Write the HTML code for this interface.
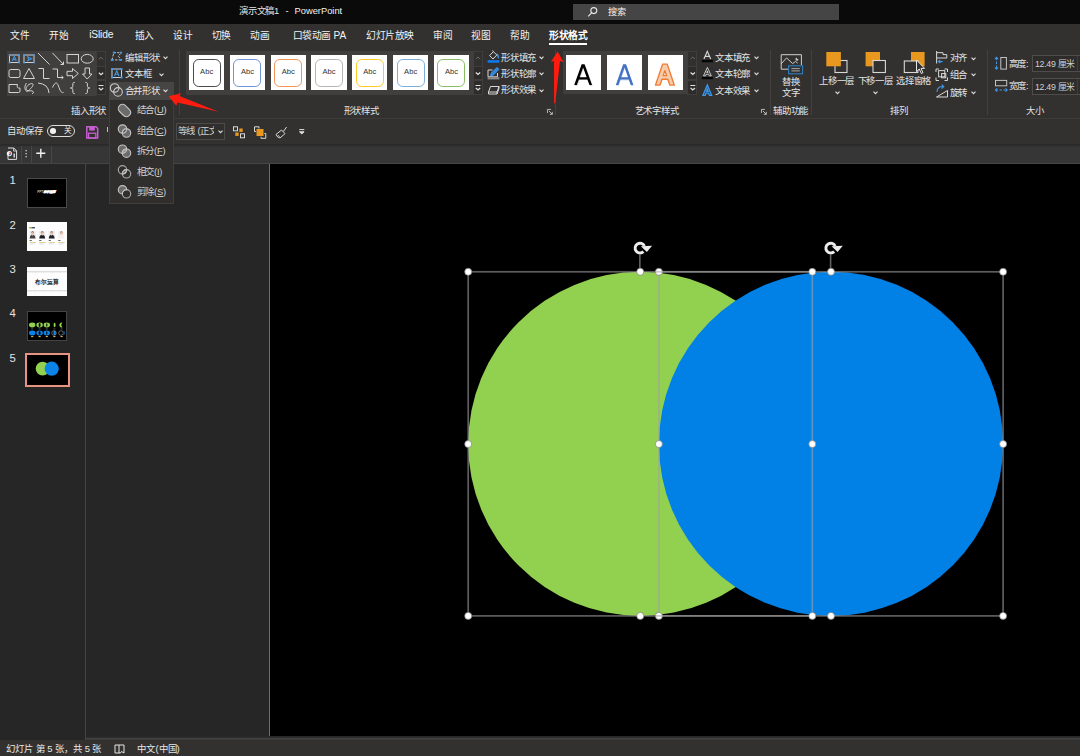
<!DOCTYPE html>
<html lang="zh-CN">
<head>
<meta charset="utf-8">
<title>PowerPoint</title>
<style>
*{margin:0;padding:0;box-sizing:border-box}
html,body{width:1080px;height:756px;overflow:hidden;background:#262626}
body{position:relative;font-family:"Liberation Sans",sans-serif;font-size:9.7px;line-height:12px;color:#fff}
.a{position:absolute}
.t{position:absolute;white-space:nowrap;color:#f3f3f3;height:12px;overflow:visible}
.b{font-weight:bold}
.r{font-size:9.4px;letter-spacing:-0.25px;color:#e4e4e4}
.tb{letter-spacing:-0.4px}
svg{position:absolute;overflow:visible}
.ln{stroke:#d4d4d4;stroke-width:1;fill:none}
.hd{position:absolute;width:8px;height:8px;border-radius:50%;background:#fff;border:.8px solid #b0b0b0}
.car{position:absolute;width:5px;height:3px}
</style>
</head>
<body>
<!-- ===== title bar ===== -->
<div class="a" id="titlebar" style="left:0;top:0;width:1080px;height:24px;background:#0a0a0a"></div>
<div class="t r" style="left:239px;top:5px">演示文稿1</div><div class="t" style="left:285.6px;top:5px;font-size:9.4px">-</div><div class="t" style="left:294.6px;top:5px;font-size:9.3px">PowerPoint</div>
<div class="a" style="left:573px;top:4px;width:266px;height:16px;background:#454545"></div>
<svg style="left:587px;top:6px" width="12" height="12" viewBox="0 0 12 12"><circle cx="6.8" cy="4.6" r="3" fill="none" stroke="#e6e6e6" stroke-width="1.1"/><path d="M4.6 6.8 L1.2 10.4" stroke="#e6e6e6" stroke-width="1.2" fill="none"/></svg>
<div class="t" style="left:608px;top:6px;font-size:9.2px">搜索</div>

<!-- ===== ribbon background ===== -->
<div class="a" id="ribbon" style="left:0;top:24px;width:1080px;height:95px;background:#323130"></div>
<div class="a" style="left:0;top:118px;width:1080px;height:1px;background:#3d3c3b"></div>
<!-- QAT row -->
<div class="a" id="qat" style="left:0;top:119px;width:1080px;height:26px;background:#323130"></div>
<div class="a" style="left:0;top:144px;width:1080px;height:1px;background:#2a2928"></div>
<!-- doc tab strip -->
<div class="a" id="strip" style="left:0;top:145px;width:1080px;height:18px;background:linear-gradient(#2a2a2a 0,#323232 1.5px,#363636 2.5px,#363636 100%)"></div>
<div class="a" style="left:0;top:163px;width:1080px;height:1px;background:#454545"></div>


<!-- ===== tabs ===== -->
<div class="t tb" style="left:10px;top:29.5px">文件</div>
<div class="t tb" style="left:49px;top:29.5px">开始</div>
<div class="t" style="left:89.3px;top:29.3px;font-size:10.3px;letter-spacing:-0.22px">iSlide</div>
<div class="t tb" style="left:134.5px;top:29.5px">插入</div>
<div class="t tb" style="left:173px;top:29.5px">设计</div>
<div class="t tb" style="left:211.8px;top:29.5px">切换</div>
<div class="t tb" style="left:250px;top:29.5px">动画</div>
<div class="t tb" style="left:292.5px;top:29.5px">口袋动画<span style="letter-spacing:0;margin-left:2.6px;font-size:10.1px">PA</span></div>
<div class="t tb" style="left:366px;top:29.5px">幻灯片放映</div>
<div class="t tb" style="left:433px;top:29.5px">审阅</div>
<div class="t tb" style="left:471px;top:29.5px">视图</div>
<div class="t tb" style="left:510px;top:29.5px">帮助</div>
<div class="t b" style="left:549px;top:29.5px;color:#fff;letter-spacing:-0.45px">形状格式</div>
<div class="a" style="left:549px;top:43px;width:38px;height:2px;background:#fff"></div>

<!-- ===== group: insert shapes ===== -->
<div class="a" style="left:7px;top:51px;width:89px;height:45px;background:#403f3e"></div>
<div class="a" style="left:96px;top:51px;width:10.2px;height:44px;background:#3f3e3d"></div>
<div class="a" style="left:97px;top:52px;width:8.2px;height:13.5px;background:#31302f"></div><div class="a" style="left:97px;top:66.6px;width:8.2px;height:12.8px;background:#2d2c2b"></div>
<div class="a" style="left:97px;top:80.6px;width:8.2px;height:13.6px;background:#2d2c2b"></div>
<svg style="left:0;top:0" width="110" height="100" viewBox="0 0 110 100">
 <g class="ln" stroke-width="1">
  <!-- row1 -->
  <rect x="9.5" y="55" width="9.5" height="7.5" stroke="#cfcfcf"/>
  <rect x="24" y="55" width="10" height="7.5" stroke="#cfcfcf"/>
  <path d="M38 53 L49.5 64.5"/>
  <path d="M52.5 53 L63.5 64.5 M63.5 61.5 V64.5 H60.5"/>
  <rect x="67" y="54.5" width="11.5" height="8.5"/>
  <ellipse cx="87.2" cy="58.8" rx="6" ry="4.4"/>
  <!-- row2 -->
  <rect x="9" y="69.5" width="11" height="8" rx="1.8"/>
  <path d="M29 68.5 L34.5 78.5 H23.5 Z"/>
  <path d="M38.5 68.5 H43.5 V78.5 H49.5"/>
  <path d="M52.5 69 H57.5 V77.5 H63 M61.5 76 L63.3 77.5 L61.5 79"/>
  <path d="M67 71.3 H72.5 V68.5 L78.3 73.5 L72.5 78.5 V75.7 H67 Z"/>
  <path d="M85 68 H89.5 V74 H92 L87.2 79 L82.5 74 H85 Z"/>
  <!-- row3 -->
  <path d="M9 84.5 H17.5 C16.5 87 17.5 88.5 20 88 V91 Q20 92.5 18.5 92.5 H9 Z"/>
  <path d="M26.5 83 C23 88 26 92.5 28 91 C33 87 34.5 83.5 31.5 83.5 C28 84 24.5 88.5 27 90.5 C29 91.5 32 90 33 91.5 C34 92.5 33.5 93.5 32 93.5"/>
  <path d="M38 83 Q48.5 84 49 93"/>
  <path d="M52.5 87.5 C56 80 57.5 83 59 87.5 C60.5 92 62 93 63.5 92.5"/>
  <path d="M74.8 82.4 C72.6 82.4 72.8 83.4 72.8 85 V86.4 C72.8 87.6 72 88 70.4 88 C72 88 72.8 88.4 72.8 89.6 V91 C72.8 92.6 72.6 93.6 74.8 93.6"/>
  <path d="M85.4 82.4 C87.6 82.4 87.4 83.4 87.4 85 V86.4 C87.4 87.6 88.2 88 89.8 88 C88.2 88 87.4 88.4 87.4 89.6 V91 C87.4 92.6 87.6 93.6 85.4 93.6"/>
 </g>
 <g fill="#3f97e8">
  <rect x="8.7" y="54.2" width="1.7" height="1.7"/><rect x="18.2" y="54.2" width="1.7" height="1.7"/><rect x="8.7" y="61.7" width="1.7" height="1.7"/><rect x="18.2" y="61.7" width="1.7" height="1.7"/>
  <rect x="23.2" y="54.2" width="1.7" height="1.7"/><rect x="33.2" y="54.2" width="1.7" height="1.7"/><rect x="23.2" y="61.7" width="1.7" height="1.7"/><rect x="33.2" y="61.7" width="1.7" height="1.7"/>
 </g>
 <path d="M12.3 61 L14.3 56.3 L16.3 61 M13 59.5 H15.6" stroke="#3f97e8" stroke-width="1.1" fill="none"/>
 <path d="M27 56.6 L31.5 58.8 L27 61 M28.3 57.4 V60.2" stroke="#3f97e8" stroke-width="1.1" fill="none"/>
 <!-- scroll glyphs -->
 <path d="M98.8 59.3 L101 57.3 L103.2 59.3" stroke="#6a6a6a" stroke-width="1" fill="none"/>
 <path d="M98.8 72.7 L101 74.7 L103.2 72.7" stroke="#e0e0e0" stroke-width="1.2" fill="none"/>
 <path d="M98.5 85.5 H103.5 M98.8 88 L101 90 L103.2 88" stroke="#e0e0e0" stroke-width="1.2" fill="none"/>
</svg>
<div class="t r" style="left:71px;top:104.5px">插入形状</div>

<!-- edit shape / text box / merge shapes -->
<svg style="left:108px;top:50px" width="70" height="50" viewBox="0 0 70 50">
 <path d="M4 9.9 L5.8 2.7 H13 M12.6 3.6 L10.2 6.2 L12.6 8.8 M13 9.9 H4" stroke="#c8c8c8" stroke-width="1" fill="none" stroke-dasharray="2.3 1.3"/>
 <g fill="#3f97e8"><rect x="2.8" y="8.9" width="2" height="2"/><rect x="4.8" y="1.6" width="2" height="2"/><rect x="12.1" y="1.6" width="2" height="2"/><rect x="12.1" y="8.9" width="2" height="2"/></g>
 <rect x="4" y="19" width="9.5" height="8.5" stroke="#cfcfcf" fill="none"/>
 <g fill="#3f97e8"><rect x="3" y="18" width="2" height="2"/><rect x="12.5" y="18" width="2" height="2"/><rect x="3" y="26.5" width="2" height="2"/><rect x="12.5" y="26.5" width="2" height="2"/></g>
 <path d="M6.6 26 L8.75 20.6 L10.9 26 M7.4 24.2 H10.1" stroke="#3f97e8" stroke-width="1.1" fill="none"/>
</svg>
<div class="a" style="left:108.5px;top:82px;width:65px;height:17.5px;background:#464544"></div>
<svg style="left:108px;top:82px" width="20" height="18" viewBox="0 0 20 18"><circle cx="6.6" cy="6" r="4.3" fill="none" stroke="#cdcdcd" stroke-width="1.1"/><circle cx="10" cy="9.9" r="4.3" fill="none" stroke="#cdcdcd" stroke-width="1.1"/></svg>
<div class="t r" style="left:125px;top:52.4px">编辑形状</div>
<div class="t r" style="left:125px;top:68px">文本框</div>
<div class="t r" style="left:124.7px;top:84.5px">合并形状</div>
<svg style="left:163px;top:56px" width="5" height="4" viewBox="0 0 5 4"><path d="M.5 .7 L2.5 2.7 L4.5 .7" stroke="#e0e0e0" stroke-width="1.1" fill="none"/></svg>
<svg style="left:158.5px;top:72.5px" width="5" height="4" viewBox="0 0 5 4"><path d="M.5 .7 L2.5 2.7 L4.5 .7" stroke="#e0e0e0" stroke-width="1.1" fill="none"/></svg>
<svg style="left:163px;top:89px" width="5" height="4" viewBox="0 0 5 4"><path d="M.5 .7 L2.5 2.7 L4.5 .7" stroke="#e0e0e0" stroke-width="1.1" fill="none"/></svg>
<div class="a" style="left:179px;top:50px;width:1px;height:65px;background:#424140"></div>

<!-- ===== group: shape styles ===== -->
<div class="a" style="left:186px;top:51px;width:286.5px;height:43.7px;background:#403f3e"></div>
<div class="a" style="left:189.0px;top:55px;width:35.3px;height:35px;background:#fff"><div class="a" style="left:3.6px;top:3.6px;width:28px;height:28.2px;border:1.6px solid #4a4a4a;border-radius:5.8px"></div><div class="t" style="left:0;width:35.3px;top:10.6px;text-align:center;font-size:7.6px;color:#333">Abc</div></div>
<div class="a" style="left:229.8px;top:55px;width:35.3px;height:35px;background:#fff"><div class="a" style="left:3.6px;top:3.6px;width:28px;height:28.2px;border:1.6px solid #7194d6;border-radius:5.8px"></div><div class="t" style="left:0;width:35.3px;top:10.6px;text-align:center;font-size:7.6px;color:#333">Abc</div></div>
<div class="a" style="left:270.6px;top:55px;width:35.3px;height:35px;background:#fff"><div class="a" style="left:3.6px;top:3.6px;width:28px;height:28.2px;border:1.6px solid #f09458;border-radius:5.8px"></div><div class="t" style="left:0;width:35.3px;top:10.6px;text-align:center;font-size:7.6px;color:#333">Abc</div></div>
<div class="a" style="left:311.4px;top:55px;width:35.3px;height:35px;background:#fff"><div class="a" style="left:3.6px;top:3.6px;width:28px;height:28.2px;border:1.6px solid #b4b4b4;border-radius:5.8px"></div><div class="t" style="left:0;width:35.3px;top:10.6px;text-align:center;font-size:7.6px;color:#333">Abc</div></div>
<div class="a" style="left:352.2px;top:55px;width:35.3px;height:35px;background:#fff"><div class="a" style="left:3.6px;top:3.6px;width:28px;height:28.2px;border:1.6px solid #ffc928;border-radius:5.8px"></div><div class="t" style="left:0;width:35.3px;top:10.6px;text-align:center;font-size:7.6px;color:#333">Abc</div></div>
<div class="a" style="left:393.0px;top:55px;width:35.3px;height:35px;background:#fff"><div class="a" style="left:3.6px;top:3.6px;width:28px;height:28.2px;border:1.6px solid #7aaedd;border-radius:5.8px"></div><div class="t" style="left:0;width:35.3px;top:10.6px;text-align:center;font-size:7.6px;color:#333">Abc</div></div>
<div class="a" style="left:433.8px;top:55px;width:35.3px;height:35px;background:#fff"><div class="a" style="left:3.6px;top:3.6px;width:28px;height:28.2px;border:1.6px solid #88bd64;border-radius:5.8px"></div><div class="t" style="left:0;width:35.3px;top:10.6px;text-align:center;font-size:7.6px;color:#333">Abc</div></div>
<div class="a" style="left:472.8px;top:51px;width:10.2px;height:44px;background:#3f3e3d"></div>
<div class="a" style="left:473.8px;top:52px;width:8.2px;height:13.5px;background:#31302f"></div><div class="a" style="left:473.8px;top:66.6px;width:8.2px;height:12.8px;background:#2d2c2b"></div>
<div class="a" style="left:473.8px;top:80.6px;width:8.2px;height:13.6px;background:#2d2c2b"></div>
<svg style="left:473px;top:51px" width="10" height="44" viewBox="0 0 10 44">
 <path d="M2.8 8 L5 6 L7.2 8" stroke="#6a6a6a" stroke-width="1" fill="none"/>
 <path d="M2.8 21.5 L5 23.5 L7.2 21.5" stroke="#e0e0e0" stroke-width="1.2" fill="none"/>
 <path d="M2.5 34.5 H7.5 M2.8 37 L5 39 L7.2 37" stroke="#e0e0e0" stroke-width="1.2" fill="none"/>
</svg>
<!-- fill / outline / effects icons -->
<svg style="left:486px;top:50px" width="16" height="48" viewBox="0 0 16 48">
 <path d="M3.6 5.6 L7.4 1.6 L10.8 5 L7 9 Z M7.4 1.6 L6.6 .4" stroke="#d8d8d8" stroke-width="1" fill="none"/><path d="M11 3.6 Q13.4 5.4 12.4 8.4 Q11.2 7 11 3.6Z" fill="#3f97e8" stroke="#3f97e8" stroke-width=".6"/>
 <rect x="1.6" y="10.2" width="11.8" height="2.5" fill="#0a7cf5"/>
 <path d="M4.6 25.8 L5.4 23 L11 17.4 L12.9 19.3 L7.4 25 Z" stroke="#3f97e8" stroke-width="1" fill="#2f86dc"/>
 <path d="M2 20 H6.5 M2 20 V26.8 H11.5 V23" stroke="#d8d8d8" stroke-width="1" fill="none"/>
 <rect x="1.6" y="27.2" width="11.8" height="2.2" fill="#8a8a8a"/>
 <path d="M4.5 36.5 H13 L11 42 H2.5 Z M2.5 42 V44 H11 L13 38.5 V36.5 M11 42 V44" stroke="#d8d8d8" stroke-width="1" fill="none"/>
</svg>
<div class="t r" style="left:501px;top:51.6px">形状填充</div>
<svg style="left:539.3px;top:56.2px" width="5" height="4" viewBox="0 0 5 4"><path d="M.5 .7 L2.5 2.7 L4.5 .7" stroke="#e0e0e0" stroke-width="1.1" fill="none"/></svg>
<div class="t r" style="left:501px;top:67.8px">形状轮廓</div>
<svg style="left:539.3px;top:72.39999999999999px" width="5" height="4" viewBox="0 0 5 4"><path d="M.5 .7 L2.5 2.7 L4.5 .7" stroke="#e0e0e0" stroke-width="1.1" fill="none"/></svg>
<div class="t r" style="left:501px;top:84.2px">形状效果</div>
<svg style="left:539.3px;top:88.8px" width="5" height="4" viewBox="0 0 5 4"><path d="M.5 .7 L2.5 2.7 L4.5 .7" stroke="#e0e0e0" stroke-width="1.1" fill="none"/></svg>
<div class="t r" style="left:343.5px;top:104.5px">形状样式</div>
<svg style="left:547px;top:109.3px" width="6.2" height="6.2" viewBox="0 0 7 7"><path d="M.5 4.5 V.5 H4.5 M2.2 2.2 L6 6 M6 3.2 V6 H3.2" stroke="#c8c8c8" stroke-width="1" fill="none"/></svg>
<div class="a" style="left:555px;top:50px;width:1px;height:65px;background:#424140"></div>
<!-- ===== group: wordart styles ===== -->
<div class="a" style="left:563px;top:51px;width:124px;height:43px;background:#403f3e"></div>
<div class="a" style="left:566px;top:55px;width:35px;height:35px;background:#fff"></div>
<div class="a" style="left:607px;top:55px;width:35px;height:35px;background:#fff"></div>
<div class="a" style="left:647.5px;top:55px;width:35.5px;height:35px;background:#fff"></div>
<svg style="left:566px;top:55px" width="117" height="35" viewBox="0 0 117 35">
 <g fill-rule="evenodd">
  <path d="M8.90 30.70 L16.35 9.90 H19.25 L26.70 30.70 H24.10 L22.09 25.10 H13.51 L11.50 30.70 Z M14.26 23.00 H21.34 L17.80 13.11 Z" fill="#cdcdcd"/>
  <path d="M8.20 30.00 L15.65 9.20 H18.55 L26.00 30.00 H23.40 L21.39 24.40 H12.81 L10.80 30.00 Z M13.56 22.30 H20.64 L17.10 12.41 Z" fill="#000"/>
  <path d="M50.15 31.00 L57.45 10.20 H60.35 L67.65 31.00 H65.05 L63.08 25.40 H54.72 L52.75 31.00 Z M55.45 23.30 H62.35 L58.90 13.48 Z" fill="#d5def1"/>
  <path d="M49.85 30.00 L57.15 9.20 H60.05 L67.35 30.00 H64.75 L62.78 24.40 H54.42 L52.45 30.00 Z M55.15 22.30 H62.05 L58.60 12.48 Z" fill="#4472c4"/>
  <path d="M89.50 30.10 L96.60 9.10 H101.20 L108.30 30.10 H103.80 L101.81 24.20 H95.99 L94.00 30.10 Z M97.21 20.60 H100.59 L98.90 15.61 Z" fill="#f8cbad" stroke="#ed7d31" stroke-width="1.4" stroke-linejoin="round"/>
 </g>
</svg>
<div class="a" style="left:687px;top:51px;width:10px;height:44px;background:#3f3e3d"></div>
<div class="a" style="left:688px;top:52px;width:8px;height:13.5px;background:#31302f"></div><div class="a" style="left:688px;top:66.6px;width:8px;height:12.8px;background:#2d2c2b"></div>
<div class="a" style="left:688px;top:80.6px;width:8px;height:13.6px;background:#2d2c2b"></div>
<svg style="left:687.5px;top:51px" width="10" height="44" viewBox="0 0 10 44">
 <path d="M2.6 8 L4.8 6 L7 8" stroke="#6a6a6a" stroke-width="1" fill="none"/>
 <path d="M2.6 21.5 L4.8 23.5 L7 21.5" stroke="#e0e0e0" stroke-width="1.2" fill="none"/>
 <path d="M2.3 34.5 H7.3 M2.6 37 L4.8 39 L7 37" stroke="#e0e0e0" stroke-width="1.2" fill="none"/>
</svg>
<svg style="left:700px;top:50px" width="16" height="48" viewBox="0 0 16 48">
 <path d="M3.9 8.9 L7.3 1.3 L10.7 8.9 M5.1 6.4 H9.5" stroke="#d8d8d8" stroke-width="1.15" fill="none"/>
 <rect x="1.8" y="9.9" width="11.1" height="2.4" fill="#060606"/>
 <path d="M3.5 25.9 L7.4 17.4 L11.3 25.9 H9.3 L8.6 24.2 H6.2 L5.5 25.9 Z M6.8 22.6 H8 L7.4 20.9 Z" stroke="#d8d8d8" stroke-width=".9" fill="none"/>
 <rect x="1.8" y="27" width="11.1" height="2.2" fill="#060606"/>
 <path d="M3 45.3 L7.3 35 L11.6 45.3 H9.4 L8.6 43.2 H6 L5.2 45.3 Z M6.6 41.3 H8 L7.3 39.3 Z" stroke="#3f97e8" stroke-width="1.3" fill="#1c3a5c"/>
</svg>
<div class="t r" style="left:715px;top:51.6px">文本填充</div>
<svg style="left:753.5px;top:56.2px" width="5" height="4" viewBox="0 0 5 4"><path d="M.5 .7 L2.5 2.7 L4.5 .7" stroke="#e0e0e0" stroke-width="1.1" fill="none"/></svg>
<div class="t r" style="left:715px;top:67.8px">文本轮廓</div>
<svg style="left:753.5px;top:72.39999999999999px" width="5" height="4" viewBox="0 0 5 4"><path d="M.5 .7 L2.5 2.7 L4.5 .7" stroke="#e0e0e0" stroke-width="1.1" fill="none"/></svg>
<div class="t r" style="left:715px;top:84.6px">文本效果</div>
<svg style="left:753.5px;top:89.19999999999999px" width="5" height="4" viewBox="0 0 5 4"><path d="M.5 .7 L2.5 2.7 L4.5 .7" stroke="#e0e0e0" stroke-width="1.1" fill="none"/></svg>
<div class="t r" style="left:634.5px;top:104.5px">艺术字样式</div>
<svg style="left:761px;top:109.3px" width="6.2" height="6.2" viewBox="0 0 7 7"><path d="M.5 4.5 V.5 H4.5 M2.2 2.2 L6 6 M6 3.2 V6 H3.2" stroke="#c8c8c8" stroke-width="1" fill="none"/></svg>
<div class="a" style="left:769.5px;top:50px;width:1px;height:65px;background:#424140"></div>
<!-- ===== group: accessibility ===== -->
<svg style="left:780px;top:53px" width="24" height="22" viewBox="0 0 24 22">
 <path d="M8 16.2 H1.2 V1.7 H21.4 V12" stroke="#cfcfcf" stroke-width="1" fill="none"/>
 <path d="M1.2 10.8 L6.6 4.9 L12.6 10.6 L15.6 8.4 L17.6 10.2" stroke="#cfcfcf" stroke-width="1" fill="none"/>
 <path d="M16.6 4.6 A1.6 1.6 0 1 0 18.6 6.6 A2.2 2.2 0 0 1 16.6 4.6Z" fill="#cfcfcf"/>
 <rect x="8.6" y="12.8" width="14" height="8" fill="#323130" stroke="#2b7fc4" stroke-width="1.1"/>
 <path d="M11.4 15.6 H19.8 M11.4 17.9 H19.8" stroke="#a8a8a8" stroke-width="1"/>
</svg>
<div class="t r" style="left:782px;top:76px">替换</div>
<div class="t r" style="left:782px;top:87px">文字</div>
<div class="t r" style="left:773px;top:104.5px">辅助功能</div>
<div class="a" style="left:811px;top:50px;width:1px;height:65px;background:#424140"></div>

<!-- ===== group: arrange ===== -->
<svg style="left:820px;top:50px" width="112" height="26" viewBox="0 0 112 26">
 <rect x="15" y="10.5" width="12" height="12" fill="none" stroke="#d8d8d8" stroke-width="1.1"/>
 <rect x="6.3" y="2" width="14.6" height="14.3" fill="#e8981f"/>
 <rect x="45.6" y="2" width="14.4" height="14.3" fill="#e8981f"/>
 <rect x="53" y="10.5" width="12.4" height="12" fill="#323130" stroke="#d8d8d8" stroke-width="1.1"/>
 <rect x="91" y="2" width="13.6" height="14.3" fill="#e8981f"/>
 <rect x="84.3" y="11" width="13.6" height="11.5" fill="#323130" stroke="#d8d8d8" stroke-width="1.1"/>
 <path d="M96.5 10 V21.5 L99.3 19 L101.3 23.5 L103 22.7 L101 18.4 H104.6 Z" fill="#323130" stroke="#e6e6e6" stroke-width="1"/>
</svg>
<div class="t r" style="left:819px;top:75px">上移一层</div>
<div class="t r" style="left:857.5px;top:75px">下移一层</div>
<div class="t r" style="left:896px;top:75px">选择窗格</div>
<svg style="left:835px;top:90.6px" width="5" height="4" viewBox="0 0 5 4"><path d="M.5 .7 L2.5 2.7 L4.5 .7" stroke="#e0e0e0" stroke-width="1.1" fill="none"/></svg>
<svg style="left:873.3px;top:90.6px" width="5" height="4" viewBox="0 0 5 4"><path d="M.5 .7 L2.5 2.7 L4.5 .7" stroke="#e0e0e0" stroke-width="1.1" fill="none"/></svg>
<svg style="left:934px;top:50px" width="16" height="50" viewBox="0 0 16 50">
 <path d="M2.6 1 V13.6" stroke="#d0d0d0" stroke-width="1.1"/>
 <path d="M3 2.7 H9 V4.6 H12.8 V8 H3" fill="none" stroke="#d8d8d8"/>
 <path d="M8.6 11.6 H4.6 M6.2 10 L4.4 11.6 L6.2 13.2" fill="none" stroke="#3f97e8" stroke-width="1.1"/>
 <rect x="4.6" y="20.6" width="6.2" height="6.2" fill="none" stroke="#d8d8d8"/>
 <rect x="7.6" y="23.6" width="4.2" height="4.2" fill="none" stroke="#d8d8d8"/>
 <path d="M2 22 V19 H5 M10.5 19 H13.5 V22 M13.5 27.5 V30.5 H10.5 M5 30.5 H2 V27.5" stroke="#d8d8d8" stroke-width="1" fill="none"/>
 <path d="M2.5 47 H13.5 V40.5 Z" fill="none" stroke="#d8d8d8"/>
 <path d="M3 42 C3 37.5 6 36.3 9.5 36.5 M7.6 34.6 L9.8 36.5 L7.6 38.6" fill="none" stroke="#3f97e8" stroke-width="1.1"/>
</svg>
<div class="t r" style="left:949.5px;top:52px">对齐</div>
<svg style="left:970.5px;top:56.6px" width="5" height="4" viewBox="0 0 5 4"><path d="M.5 .7 L2.5 2.7 L4.5 .7" stroke="#e0e0e0" stroke-width="1.1" fill="none"/></svg>
<div class="t r" style="left:949.5px;top:68.5px">组合</div>
<svg style="left:970.5px;top:73.1px" width="5" height="4" viewBox="0 0 5 4"><path d="M.5 .7 L2.5 2.7 L4.5 .7" stroke="#e0e0e0" stroke-width="1.1" fill="none"/></svg>
<div class="t r" style="left:949.5px;top:86.5px">旋转</div>
<svg style="left:970.5px;top:91.1px" width="5" height="4" viewBox="0 0 5 4"><path d="M.5 .7 L2.5 2.7 L4.5 .7" stroke="#e0e0e0" stroke-width="1.1" fill="none"/></svg>
<div class="t r" style="left:890px;top:104.5px">排列</div>
<div class="a" style="left:987px;top:50px;width:1px;height:65px;background:#424140"></div>

<!-- ===== group: size ===== -->
<svg style="left:994px;top:56px" width="14" height="40" viewBox="0 0 14 40">
 <path d="M2.5 1.8 V12.8" stroke="#3f97e8" stroke-width="1" fill="none" stroke-dasharray="2.4 1.4"/>
 <path d="M.9 3.2 L2.5 1.4 L4.1 3.2 M.9 11.4 L2.5 13.2 L4.1 11.4" stroke="#3f97e8" stroke-width="1.1" fill="none"/>
 <rect x="6.8" y="1.5" width="5.6" height="11.6" fill="none" stroke="#c4c4c4"/>
 <rect x="1.5" y="24.4" width="11.2" height="5.4" fill="none" stroke="#c4c4c4"/>
 <path d="M1.8 34 H12.8" stroke="#3f97e8" stroke-width="1" fill="none" stroke-dasharray="2.4 1.4"/>
 <path d="M3.2 32.4 L1.4 34 L3.2 35.6 M11.4 32.4 L13.2 34 L11.4 35.6" stroke="#3f97e8" stroke-width="1.1" fill="none"/>
</svg>
<div class="t r" style="left:1008.5px;top:57.8px">高度:</div>
<div class="t r" style="left:1008.5px;top:80px">宽度:</div>
<div class="a" style="left:1032px;top:55px;width:60px;height:17px;background:#2d2c2b;border:1px solid #4e4d4c"></div>
<div class="a" style="left:1032px;top:78.4px;width:60px;height:16.8px;background:#2d2c2b;border:1px solid #4e4d4c"></div><div class="a" style="left:1077px;top:56px;width:1px;height:15px;background:#403f3e"></div><div class="a" style="left:1077px;top:79.4px;width:1px;height:15px;background:#403f3e"></div>
<div class="t" style="left:1035px;top:57.5px;font-size:8.8px;letter-spacing:-0.3px;color:#d0d0d0">12.49 厘米</div>
<div class="t" style="left:1035px;top:80.6px;font-size:8.8px;letter-spacing:-0.3px;color:#d0d0d0">12.49 厘米</div>
<div class="t r" style="left:1026px;top:104.5px">大小</div>

<!-- ===== quick access toolbar ===== -->
<div class="t r" style="left:7.3px;top:125px">自动保存</div>
<div class="a" style="left:47px;top:125.3px;width:28px;height:11.6px;border:1px solid #dcdcdc;border-radius:6px"></div>
<div class="a" style="left:50.3px;top:128.3px;width:5.6px;height:5.6px;border-radius:50%;background:#f0f0f0"></div>
<div class="t" style="left:63.5px;top:125.4px;font-size:7.6px">关</div>
<svg style="left:86px;top:126px" width="13" height="13" viewBox="0 0 13 13">
 <path d="M.8 .8 H10 L11.7 2.5 V12 H.8 Z" fill="none" stroke="#c65fd0" stroke-width="1.5"/>
 <rect x="3.2" y=".8" width="5.6" height="3.8" fill="#c65fd0"/>
 <rect x="2.6" y="7.2" width="7.2" height="4.8" fill="none" stroke="#c65fd0" stroke-width="1.3"/>
</svg>
<div class="a" style="left:106.5px;top:126.5px;width:1.5px;height:5px;background:#bdbdbd"></div>
<div class="a" style="left:175.5px;top:123px;width:49.5px;height:17px;background:#302f2e;border:1px solid #4c4b4a"></div>
<div class="a" style="left:177px;top:124px;width:37.4px;height:15px;overflow:hidden"><div class="t" style="left:.5px;top:1.3px;font-size:9.4px;letter-spacing:-0.2px;color:#cfcfcf">等线 (正文</div></div>
<svg style="left:218px;top:130px" width="5" height="4" viewBox="0 0 5 4"><path d="M.5 .7 L2.5 2.7 L4.5 .7" stroke="#e0e0e0" stroke-width="1.1" fill="none"/></svg>
<svg style="left:232px;top:125px" width="76" height="15" viewBox="0 0 76 15">
 <rect x="1.5" y="1.8" width="4" height="4" fill="none" stroke="#d8d8d8"/>
 <rect x="7.3" y="3.5" width="3.4" height="3.4" fill="#e8981f"/>
 <rect x="3.3" y="7.5" width="3.4" height="3.4" fill="#e8981f"/>
 <rect x="8.5" y="8.8" width="4" height="4" fill="none" stroke="#d8d8d8"/>
 <path d="M27 3.5 V1.8 H22.5 V6.5 H24" fill="none" stroke="#d8d8d8"/>
 <rect x="24.5" y="4" width="7" height="7" fill="#e8981f"/>
 <path d="M29 11.8 V13.3 H33.8 V8.5 H32.3" fill="none" stroke="#d8d8d8"/>
 <path d="M44 9.5 L49.5 5 L53 8.6 L48 13 Q45 12.5 44 9.5 Z M46 10.2 L47.5 11.8 M51.3 6.6 L54.6 2" fill="none" stroke="#d8d8d8" stroke-width="1"/>
 <path d="M67.3 4.6 H72.3 M67.5 6.8 L69.8 8.9 L72.1 6.8 Z" stroke="#e0e0e0" stroke-width="1" fill="#e0e0e0"/>
</svg>

<!-- ===== document strip ===== -->
<div class="a" style="left:21px;top:146px;width:1px;height:17px;background:#474747"></div>
<div class="a" style="left:31px;top:146px;width:1px;height:17px;background:#474747"></div>
<div class="a" style="left:51px;top:146px;width:1px;height:17px;background:#474747"></div>
<svg style="left:6px;top:147.2px" width="46" height="14" viewBox="0 0 46 14">
 <path d="M2 1 H7.8 L10.6 3.8 V12.4 H2 V8" fill="none" stroke="#e0e0e0" stroke-width="1"/>
 <path d="M7.6 1.2 V4 H10.4" fill="none" stroke="#e0e0e0" stroke-width=".9"/>
 <circle cx="3.4" cy="6.6" r="2.6" fill="#f2f2f2"/><path d="M3.5 6.6 L3.5 4.9 A1.7 1.7 0 0 1 5.1 7.1 Z" fill="#d8452a"/><path d="M3.5 6.6 L5.1 7.1 A1.7 1.7 0 0 1 2.6 8 Z" fill="#3b74d8"/>
 <path d="M8.2 6.5 V10.5" stroke="#e0e0e0" stroke-width="1.4"/>
 <rect x="19.5" y="3" width="1.3" height="1.3" fill="#d0d0d0"/><rect x="19.5" y="6" width="1.3" height="1.3" fill="#d0d0d0"/><rect x="19.5" y="9" width="1.3" height="1.3" fill="#d0d0d0"/>
 <path d="M30.3 6.3 H39.3 M34.8 1.8 V10.8" stroke="#f2f2f2" stroke-width="1.4"/>
</svg>


<!-- ===== work area ===== -->
<div class="a" id="thumbs" style="left:0;top:164px;width:85px;height:576px;background:#262626"></div>
<div class="a" style="left:85px;top:164px;width:1px;height:576px;background:#444"></div>
<div class="a" id="midpane" style="left:86px;top:164px;width:183px;height:573px;background:#262626"></div>
<div class="a" style="left:269px;top:164px;width:1px;height:573px;background:#6e6e6e"></div>
<div class="a" id="slide" style="left:270px;top:164px;width:810px;height:572px;background:#000"></div>
<div class="a" style="left:86px;top:736px;width:994px;height:2px;background:linear-gradient(#262626,#2d2d2d)"></div>
<div class="a" style="left:86px;top:738px;width:994px;height:1px;background:#434343"></div><div class="a" style="left:86px;top:739px;width:994px;height:1px;background:#3b3a3a"></div>


<!-- ===== thumbnails ===== -->
<div class="t" style="left:9.5px;top:174px;font-size:11.3px;color:#e4e4e4">1</div>
<div class="t" style="left:9.5px;top:218.5px;font-size:11.3px;color:#e4e4e4">2</div>
<div class="t" style="left:9.5px;top:263px;font-size:11.3px;color:#e4e4e4">3</div>
<div class="t" style="left:9.5px;top:307px;font-size:11.3px;color:#e4e4e4">4</div>
<div class="t" style="left:9.5px;top:351.5px;font-size:11.3px;color:#e4e4e4">5</div>
<div class="a" style="left:27.3px;top:177.5px;width:40.2px;height:30px;background:#000;border:1px solid #4a4a4a"></div>
<svg style="left:27.3px;top:177.5px" width="41" height="30" viewBox="0 0 41 30"><g font-family="Liberation Sans, sans-serif" font-style="italic" font-weight="bold"><text x="10.2" y="15.1" font-size="3" fill="#c8c8c8">PPT</text><text x="16.6" y="15.3" font-size="3.3" fill="#fff" stroke="#fff" stroke-width=".3" letter-spacing="-.05" transform="translate(3.1,0) skewX(-12)">布尔运算</text></g></svg>
<div class="a" style="left:27.3px;top:222.2px;width:40px;height:29.2px;background:#fdfdfd"></div>
<svg style="left:27.3px;top:222.2px" width="41" height="30" viewBox="0 0 41 30">
 <rect x="2.2" y="5" width="2.6" height="1.4" fill="#9aa83c"/><rect x="4.8" y="5" width="3.2" height="1.4" fill="#44506a"/>
 <rect x="2.5" y="9" width="6.2" height="7.4" fill="#ececf0"/><ellipse cx="5.6" cy="11" rx="1.5" ry="1.7" fill="#e2bfa8"/><path d="M3.9999999999999996 10.6 Q5.6 8.2 7.199999999999999 10.6 Q5.6 9.6 3.9999999999999996 10.6Z" fill="#2a2624"/><path d="M2.5999999999999996 16.4 Q2.8 13.2 4.699999999999999 12.7 L5.6 13.8 L6.5 12.7 Q8.399999999999999 13.2 8.6 16.4Z" fill="#4a4245"/><rect x="12.1" y="9" width="6.2" height="7.4" fill="#ececf0"/><ellipse cx="15.2" cy="11" rx="1.5" ry="1.7" fill="#e2bfa8"/><path d="M13.6 10.6 Q15.2 8.2 16.8 10.6 Q15.2 9.6 13.6 10.6Z" fill="#2a2624"/><path d="M12.2 16.4 Q12.399999999999999 13.2 14.299999999999999 12.7 L15.2 13.8 L16.099999999999998 12.7 Q18.0 13.2 18.2 16.4Z" fill="#1e1e22"/><rect x="21.6" y="9" width="6.2" height="7.4" fill="#ececf0"/><ellipse cx="24.7" cy="11" rx="1.5" ry="1.7" fill="#e2bfa8"/><path d="M23.099999999999998 10.6 Q24.7 8.2 26.3 10.6 Q24.7 9.6 23.099999999999998 10.6Z" fill="#2a2624"/><path d="M21.7 16.4 Q21.9 13.2 23.8 12.7 L24.7 13.8 L25.599999999999998 12.7 Q27.5 13.2 27.7 16.4Z" fill="#23232a"/><rect x="31.2" y="9" width="6.2" height="7.4" fill="#f6f1f2"/><ellipse cx="34.3" cy="11" rx="1.5" ry="1.7" fill="#e2bfa8"/><path d="M32.699999999999996 10.6 Q34.3 8.2 35.9 10.6 Q34.3 9.6 32.699999999999996 10.6Z" fill="#6a5550"/><path d="M31.299999999999997 16.4 Q31.499999999999996 13.2 33.4 12.7 L34.3 13.8 L35.199999999999996 12.7 Q37.099999999999994 13.2 37.3 16.4Z" fill="#f4eef0"/>
 <g fill="#555"><rect x="2.6" y="18" width="2.2" height=".9"/><rect x="12.2" y="18" width="2.2" height=".9"/><rect x="21.7" y="18" width="2.2" height=".9"/><rect x="31.3" y="18" width="2.2" height=".9"/></g>
 <g fill="#d8c878"><rect x="2.6" y="20" width="6.4" height=".8"/><rect x="12.2" y="20" width="6.4" height=".8"/><rect x="21.7" y="20" width="6.4" height=".8"/><rect x="31.3" y="20" width="6.4" height=".8"/></g>
 <g fill="#c9d3e6"><rect x="2.6" y="21.6" width="5" height=".7"/><rect x="12.2" y="21.6" width="5" height=".7"/><rect x="21.7" y="21.6" width="5" height=".7"/><rect x="31.3" y="21.6" width="5" height=".7"/></g>
</svg>
<div class="a" style="left:27.3px;top:266.6px;width:40px;height:29.2px;background:#fdfdfd"></div>
<svg style="left:27.3px;top:266.5px" width="41" height="30" viewBox="0 0 41 30">
 <path d="M0 4.8 H40 M0 23.8 H40" stroke="#cfcfcf" stroke-width=".9"/>
 <path d="M8 3.4 V6.4 M16.5 3.4 V6.4 M25 3.4 V6.4 M33 3.4 V6.4 M8 22.4 V25.4 M16.5 22.4 V25.4 M25 22.4 V25.4 M33 22.4 V25.4" stroke="#e4e4e4" stroke-width=".8"/>
 <text x="19.8" y="17" font-family="Liberation Serif, serif" font-size="5.7" font-weight="bold" fill="#1c1c1c" text-anchor="middle" letter-spacing="-.2">布尔运算</text>
 <rect x="16.3" y="14.2" width="1.1" height="2.6" fill="#e8502f"/>
</svg>
<div class="a" style="left:27.3px;top:310.7px;width:40.2px;height:30px;background:#000;border:1px solid #444"></div>
<svg style="left:27.3px;top:310.7px" width="41" height="30" viewBox="0 0 41 30">
 <g fill="#92d050"><ellipse cx="5.2" cy="14" rx="3.2" ry="2.4"/><ellipse cx="12.6" cy="14" rx="3.2" ry="2.4"/><ellipse cx="19.8" cy="14" rx="3.2" ry="2.4"/><ellipse cx="27.6" cy="14" rx="1" ry="2.2"/><path d="M35.5 11.6 A2.5 2.5 0 1 0 35.5 16.4 A3.4 3.4 0 0 1 35.5 11.6Z"/></g>
 <g fill="#0a84e8"><ellipse cx="5.2" cy="22" rx="3.2" ry="2.4"/><ellipse cx="12.6" cy="22" rx="3.2" ry="2.4"/><ellipse cx="19.8" cy="22" rx="3.2" ry="2.4"/><ellipse cx="27.6" cy="22" rx="1.2" ry="2.2"/><path d="M36 19.6 A2.5 2.5 0 0 1 36 24.4 A3.4 3.4 0 0 0 36 19.6Z"/></g>
 <g fill="#000"><ellipse cx="12.6" cy="14" rx="1" ry="2"/><ellipse cx="12.6" cy="22" rx="1" ry="2"/><ellipse cx="19.8" cy="14" rx=".6" ry="1.8"/><ellipse cx="19.8" cy="22" rx=".6" ry="1.8"/></g>
 <g fill="none" stroke="#bdbdbd" stroke-width=".5"><circle cx="27" cy="22" r="2.3"/><circle cx="34" cy="22" r="2.3"/></g>
 <g fill="#e8b860"><rect x="4.2" y="25" width="2" height="1.1"/><rect x="11.6" y="25" width="2" height="1.1"/><rect x="18.8" y="25" width="2" height="1.1"/><rect x="26.4" y="25" width="2" height="1.1"/><rect x="33.6" y="25" width="2" height="1.1"/></g>
 <g fill="#777"><rect x="4.2" y="17.6" width="2" height=".7"/><rect x="11.6" y="17.6" width="2" height=".7"/><rect x="18.8" y="17.6" width="2" height=".7"/><rect x="26.4" y="17.6" width="2" height=".7"/><rect x="33.6" y="17.6" width="2" height=".7"/></g>
</svg>
<div class="a" style="left:24.6px;top:353px;width:45.6px;height:34.4px;background:#000;border:2px solid #e8937f"></div>
<svg style="left:24px;top:352px" width="48" height="36" viewBox="24 352 48 36"><circle cx="42.6" cy="368.7" r="6.9" fill="#92d050"/><circle cx="51.7" cy="368.7" r="7.1" fill="#0a84e8"/></svg>

<!-- ===== status bar ===== -->
<div class="a" id="status" style="left:0;top:740px;width:1080px;height:16px;background:#323130"></div>
<div class="t" style="left:6px;top:743px;font-size:9.4px;color:#e6e6e6">幻灯片 第 5 张，共 5 张</div>
<svg style="left:113.8px;top:743.6px" width="12" height="10" viewBox="0 0 12 10"><path d="M1 1 H5 V9 H1 Z M5 1 H10 V9 L7.5 7.5 L6.5 9 H5" fill="none" stroke="#e6e6e6" stroke-width="1"/></svg>
<div class="t" style="left:137.4px;top:743px;font-size:9.4px;color:#e6e6e6">中文(中国)</div>

<!-- ===== slide shapes ===== -->
<svg style="left:0;top:0" width="1080" height="756" viewBox="0 0 1080 756">
 <circle cx="640.25" cy="443.85" r="172.05" fill="#92d050"/>
 <circle cx="831.0" cy="443.85" r="172.1" fill="#0180e6"/>
 <!-- blue selection -->
 <rect x="658.9" y="271.8" width="344.20" height="344.10" fill="none" stroke="#a2a2a2" stroke-opacity=".58" stroke-width="1.7"/>
 <path d="M830.6 254.8 V271.8" stroke="#8c8c8c" stroke-opacity=".7" stroke-width="1.6"/>
 <circle cx="658.9" cy="271.8" r="3.5" fill="#fff" stroke="#808080" stroke-opacity=".8" stroke-width=".9"/>
 <circle cx="658.9" cy="444.05" r="3.5" fill="#fff" stroke="#808080" stroke-opacity=".8" stroke-width=".9"/>
 <circle cx="658.9" cy="615.9" r="3.5" fill="#fff" stroke="#808080" stroke-opacity=".8" stroke-width=".9"/>
 <circle cx="831.0" cy="271.8" r="3.5" fill="#fff" stroke="#808080" stroke-opacity=".8" stroke-width=".9"/>
 <circle cx="831.0" cy="615.9" r="3.5" fill="#fff" stroke="#808080" stroke-opacity=".8" stroke-width=".9"/>
 <circle cx="1003.1" cy="271.8" r="3.5" fill="#fff" stroke="#808080" stroke-opacity=".8" stroke-width=".9"/>
 <circle cx="1003.1" cy="444.05" r="3.5" fill="#fff" stroke="#808080" stroke-opacity=".8" stroke-width=".9"/>
 <circle cx="1003.1" cy="615.9" r="3.5" fill="#fff" stroke="#808080" stroke-opacity=".8" stroke-width=".9"/>
 <g transform="translate(821.60,239.40)"><path d="M13.6 6.6 A4.9 4.9 0 1 0 12.6 12.2" fill="none" stroke="#ececec" stroke-width="2.9"/><path d="M10 6.9 L21.2 6.4 L16 12.6 Z" fill="#ececec"/></g>
 <!-- green selection -->
 <rect x="468.2" y="271.8" width="344.10" height="344.10" fill="none" stroke="#a2a2a2" stroke-opacity=".58" stroke-width="1.7"/>
 <path d="M639.85 254.8 V271.8" stroke="#8c8c8c" stroke-opacity=".7" stroke-width="1.6"/>
 <circle cx="468.2" cy="271.8" r="3.5" fill="#fff" stroke="#808080" stroke-opacity=".8" stroke-width=".9"/>
 <circle cx="468.2" cy="444.05" r="3.5" fill="#fff" stroke="#808080" stroke-opacity=".8" stroke-width=".9"/>
 <circle cx="468.2" cy="615.9" r="3.5" fill="#fff" stroke="#808080" stroke-opacity=".8" stroke-width=".9"/>
 <circle cx="640.25" cy="271.8" r="3.5" fill="#fff" stroke="#808080" stroke-opacity=".8" stroke-width=".9"/>
 <circle cx="640.25" cy="615.9" r="3.5" fill="#fff" stroke="#808080" stroke-opacity=".8" stroke-width=".9"/>
 <circle cx="812.3" cy="271.8" r="3.5" fill="#fff" stroke="#808080" stroke-opacity=".8" stroke-width=".9"/>
 <circle cx="812.3" cy="444.05" r="3.5" fill="#fff" stroke="#808080" stroke-opacity=".8" stroke-width=".9"/>
 <circle cx="812.3" cy="615.9" r="3.5" fill="#fff" stroke="#808080" stroke-opacity=".8" stroke-width=".9"/>
 <g transform="translate(630.85,239.40)"><path d="M13.6 6.6 A4.9 4.9 0 1 0 12.6 12.2" fill="none" stroke="#ececec" stroke-width="2.9"/><path d="M10 6.9 L21.2 6.4 L16 12.6 Z" fill="#ececec"/></g>
</svg>

<!-- ===== merge-shapes dropdown menu ===== -->
<div class="a" style="left:108.5px;top:99.5px;width:65px;height:104px;background:#302f2e;border:1px solid #3f3e3d;border-top:0"></div>
<svg style="left:117px;top:103px" width="16" height="96" viewBox="0 0 16 96">
 <g stroke="#c2c2c2" stroke-width="1.15">
  <!-- union -->
  <path d="M2.54 2.54 A4.2 4.2 0 0 1 8.47 2.54 L12.46 6.53 A4.2 4.2 0 0 1 6.53 12.46 L2.54 8.47 A4.2 4.2 0 0 1 2.54 2.54 Z" fill="#6b6b6b"/>
  <!-- combine -->
  <g transform="translate(0,20.5)"><circle cx="5.5" cy="5.5" r="4.2" fill="#6b6b6b"/><circle cx="9.5" cy="9.5" r="4.2" fill="#6b6b6b"/><path d="M9.696 5.304 A4.2 4.2 0 0 1 5.304 9.696 A4.2 4.2 0 0 1 9.696 5.304Z" fill="#4a4a4a"/></g>
  <!-- fragment -->
  <g transform="translate(0,40.7)"><circle cx="5.5" cy="5.5" r="4.2" fill="#6b6b6b"/><circle cx="9.5" cy="9.5" r="4.2" fill="#6b6b6b"/><path d="M9.696 5.304 A4.2 4.2 0 0 1 5.304 9.696 A4.2 4.2 0 0 1 9.696 5.304Z" fill="#8a8a8a"/></g>
  <!-- intersect -->
  <g transform="translate(0,61.3)"><circle cx="5.5" cy="5.5" r="4.2" fill="none" stroke="#a8a8a8"/><circle cx="9.5" cy="9.5" r="4.2" fill="none" stroke="#a8a8a8"/><path d="M9.696 5.304 A4.2 4.2 0 0 1 5.304 9.696 A4.2 4.2 0 0 1 9.696 5.304Z" fill="#6b6b6b"/></g>
  <!-- subtract -->
  <g transform="translate(0,81.3)"><circle cx="9.5" cy="9.5" r="4.2" fill="none" stroke="#a8a8a8"/><path d="M9.696 5.304 A4.2 4.2 0 1 0 5.304 9.696 A4.2 4.2 0 0 1 9.696 5.304Z" fill="#6b6b6b"/></g>
 </g>
</svg>
<div class="t r" style="left:136.6px;top:104.4px;color:#d2d2d2">结合(<span style="text-decoration:underline">U</span>)</div>
<div class="t r" style="left:136.6px;top:124.9px;color:#d2d2d2">组合(<span style="text-decoration:underline">C</span>)</div>
<div class="t r" style="left:136.6px;top:145.1px;color:#d2d2d2">拆分(<span style="text-decoration:underline">F</span>)</div>
<div class="t r" style="left:136.6px;top:165.6px;color:#d2d2d2">相交(<span style="text-decoration:underline">I</span>)</div>
<div class="t r" style="left:136.6px;top:185.7px;color:#d2d2d2">剪除(<span style="text-decoration:underline">S</span>)</div>

<!-- ===== red annotation arrows ===== -->
<svg style="left:0;top:0" width="1080" height="130" viewBox="0 0 1080 130">
 <path d="M168.7 96.3 L181.1 93.2 L179.4 96 L218.5 111.7 L177.5 102.5 L176.4 105.8 Z" fill="#ff1c0f"/>
 <path d="M557.7 51.5 L563.6 62.3 L560 61.1 L555.2 103.3 L554.1 103.3 L554 61.1 L550.8 62.1 Z" fill="#ff1c0f"/>
</svg>

</body>
</html>
